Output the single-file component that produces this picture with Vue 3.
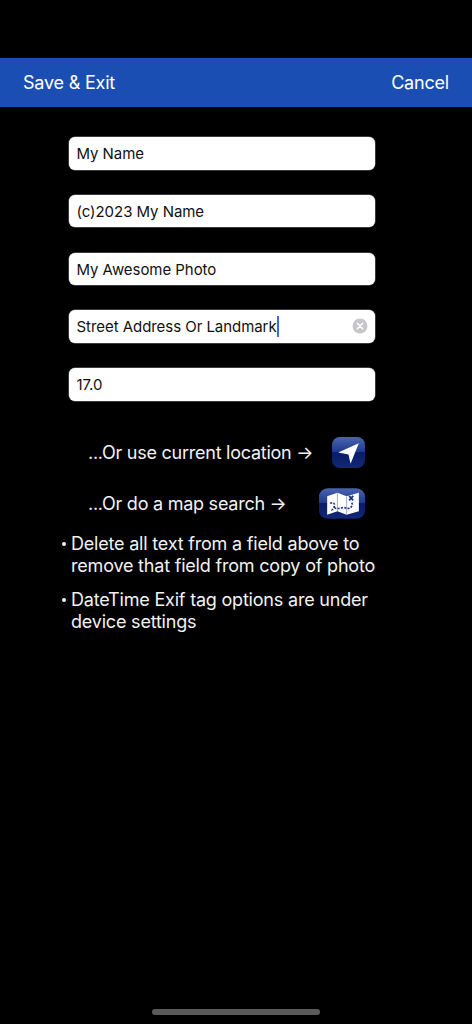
<script setup>
const fields = [
  { text: 'My Name' },
  { text: '(c)2023 My Name' },
  { text: 'My Awesome Photo' },
  { text: 'Street Address Or Landmark', active: true },
  { text: '17.0' },
]
const notes = [
  ['Delete all text from a field above to', 'remove that field from copy of photo'],
  ['DateTime Exif tag options are under', 'device settings'],
]
</script>

<template>
  <div class="screen">
    <header class="bar">
      <span>Save &amp; Exit</span>
      <span>Cancel</span>
    </header>

    <div class="fields">
      <div v-for="f in fields" :key="f.text" class="field">
        <span class="val">{{ f.text }}</span>
        <template v-if="f.active">
          <i class="caret"></i>
          <svg class="clear" viewBox="0 0 16 16" width="16" height="16">
            <circle cx="8" cy="8" r="7.5" fill="#c6c6c8" />
            <path d="M5.4 5.4l5.2 5.2M10.6 5.4l-5.2 5.2" stroke="#fff" stroke-width="1.5" stroke-linecap="round" />
          </svg>
        </template>
      </div>
    </div>

    <div class="action first">
      <span>...Or use current location →</span>
      <svg class="nav" viewBox="0 0 32 30" width="33" height="31">
        <defs>
          <linearGradient id="g1" x1="0" y1="0" x2="0" y2="1">
            <stop offset="0" stop-color="#4a64b0" />
            <stop offset="0.47" stop-color="#1f3b8e" />
            <stop offset="0.5" stop-color="#0a1c68" />
            <stop offset="1" stop-color="#112778" />
          </linearGradient>
        </defs>
        <rect width="32" height="30" rx="7.500" fill="url(#g1)" />
        <path d="M26 6L6 15l10 2 2 9z" fill="#fff" />
      </svg>
    </div>

    <div class="action second">
      <span>...Or do a map search →</span>
      <svg class="map" viewBox="0 0 45 30" width="46" height="31">
        <defs>
          <linearGradient id="g2" x1="0" y1="0" x2="0" y2="1">
            <stop offset="0" stop-color="#4a64b0" />
            <stop offset="0.47" stop-color="#1f3b8e" />
            <stop offset="0.5" stop-color="#0a1c68" />
            <stop offset="1" stop-color="#112778" />
          </linearGradient>
        </defs>
        <rect width="45" height="30" rx="8.500" fill="url(#g2)" />
        <path d="M8 8l10-3.500 9 3.500 12-3.500v18l-12 3.500-9-3.500-10 3.500z" fill="#fff" />
        <path d="M18 4.500v18M27 8v18" stroke="#8a9bc8" stroke-width=".8" />
        <path d="M11 15c3-2 5 0 4 3s-3 3-2 4M15 19c3 2 6 0 9 0s5 2 7 0 2-4 0-6" fill="none" stroke="#1c3486" stroke-width="1.600" stroke-dasharray="2 1.300" />
        <path d="M29.500 7.500l4 4.500M33.500 7.500l-4 4.500" stroke="#1c3486" stroke-width="1.700" />
      </svg>
    </div>

    <ul class="notes">
      <li v-for="n in notes" :key="n[0]">
        <span v-for="l in n" :key="l" class="line">{{ l }}</span>
      </li>
    </ul>

    <div class="home"></div>
  </div>
</template>

<style>
html, body { margin: 0; background: #000; }
</style>

<style scoped>
.screen {
  position: relative;
  width: 472px;
  height: 1024px;
  overflow: hidden;
  box-sizing: border-box;
  padding-top: 58px;
  background: #000;
  color: #fff;
  font-family: Inter, "Liberation Sans", sans-serif;
}
.bar {
  height: 49px;
  box-sizing: border-box;
  padding: 0 23px;
  display: flex;
  align-items: center;
  justify-content: space-between;
  background: #1a4eb2;
  font-size: 18px;
  letter-spacing: -0.2px;
}
.fields {
  margin: 30px 0 0 68.500px;
  width: 306px;
  display: flex;
  flex-direction: column;
  gap: 25.100px;
}
.field {
  position: relative;
  height: 32.700px;
  box-sizing: border-box;
  padding: 0.500px 8px 0;
  display: flex;
  align-items: center;
  background: #fff;
  border-radius: 6px;
  box-shadow: 0 0 0 0.500px #777;
  color: #111;
  font-size: 15px;
  letter-spacing: -0.05px;
}
.caret {
  width: 2px;
  height: 21px;
  background: #3f67e8;
  margin-left: 0;
}
.clear {
  position: absolute;
  right: 6.500px;
  top: 8px;
}
.action {
  display: flex;
  align-items: center;
  justify-content: space-between;
  box-sizing: border-box;
  width: 365px;
  height: 32px;
  padding-left: 88px;
  font-size: 18px;
  letter-spacing: -0.25px;
  color: #f2f2f2;
}
.action.first { margin-top: 36px; }
.action.second { margin-top: 19px; }
.notes {
  list-style: none;
  margin: 13px 0 0;
  padding: 0 0 0 71px;
  font-size: 18px;
  line-height: 22.500px;
  letter-spacing: -0.2px;
  color: #f2f2f2;
}
.notes li { position: relative; margin-bottom: 11px; }
.notes li::before {
  content: "";
  position: absolute;
  left: -9px;
  top: 9px;
  width: 4px;
  height: 4px;
  border-radius: 50%;
  background: #f2f2f2;
}
.line { display: block; white-space: nowrap; }
.home {
  position: absolute;
  left: 152px;
  top: 1009px;
  width: 168px;
  height: 6px;
  border-radius: 3px;
  background: #5a5a5a;
}
</style>
